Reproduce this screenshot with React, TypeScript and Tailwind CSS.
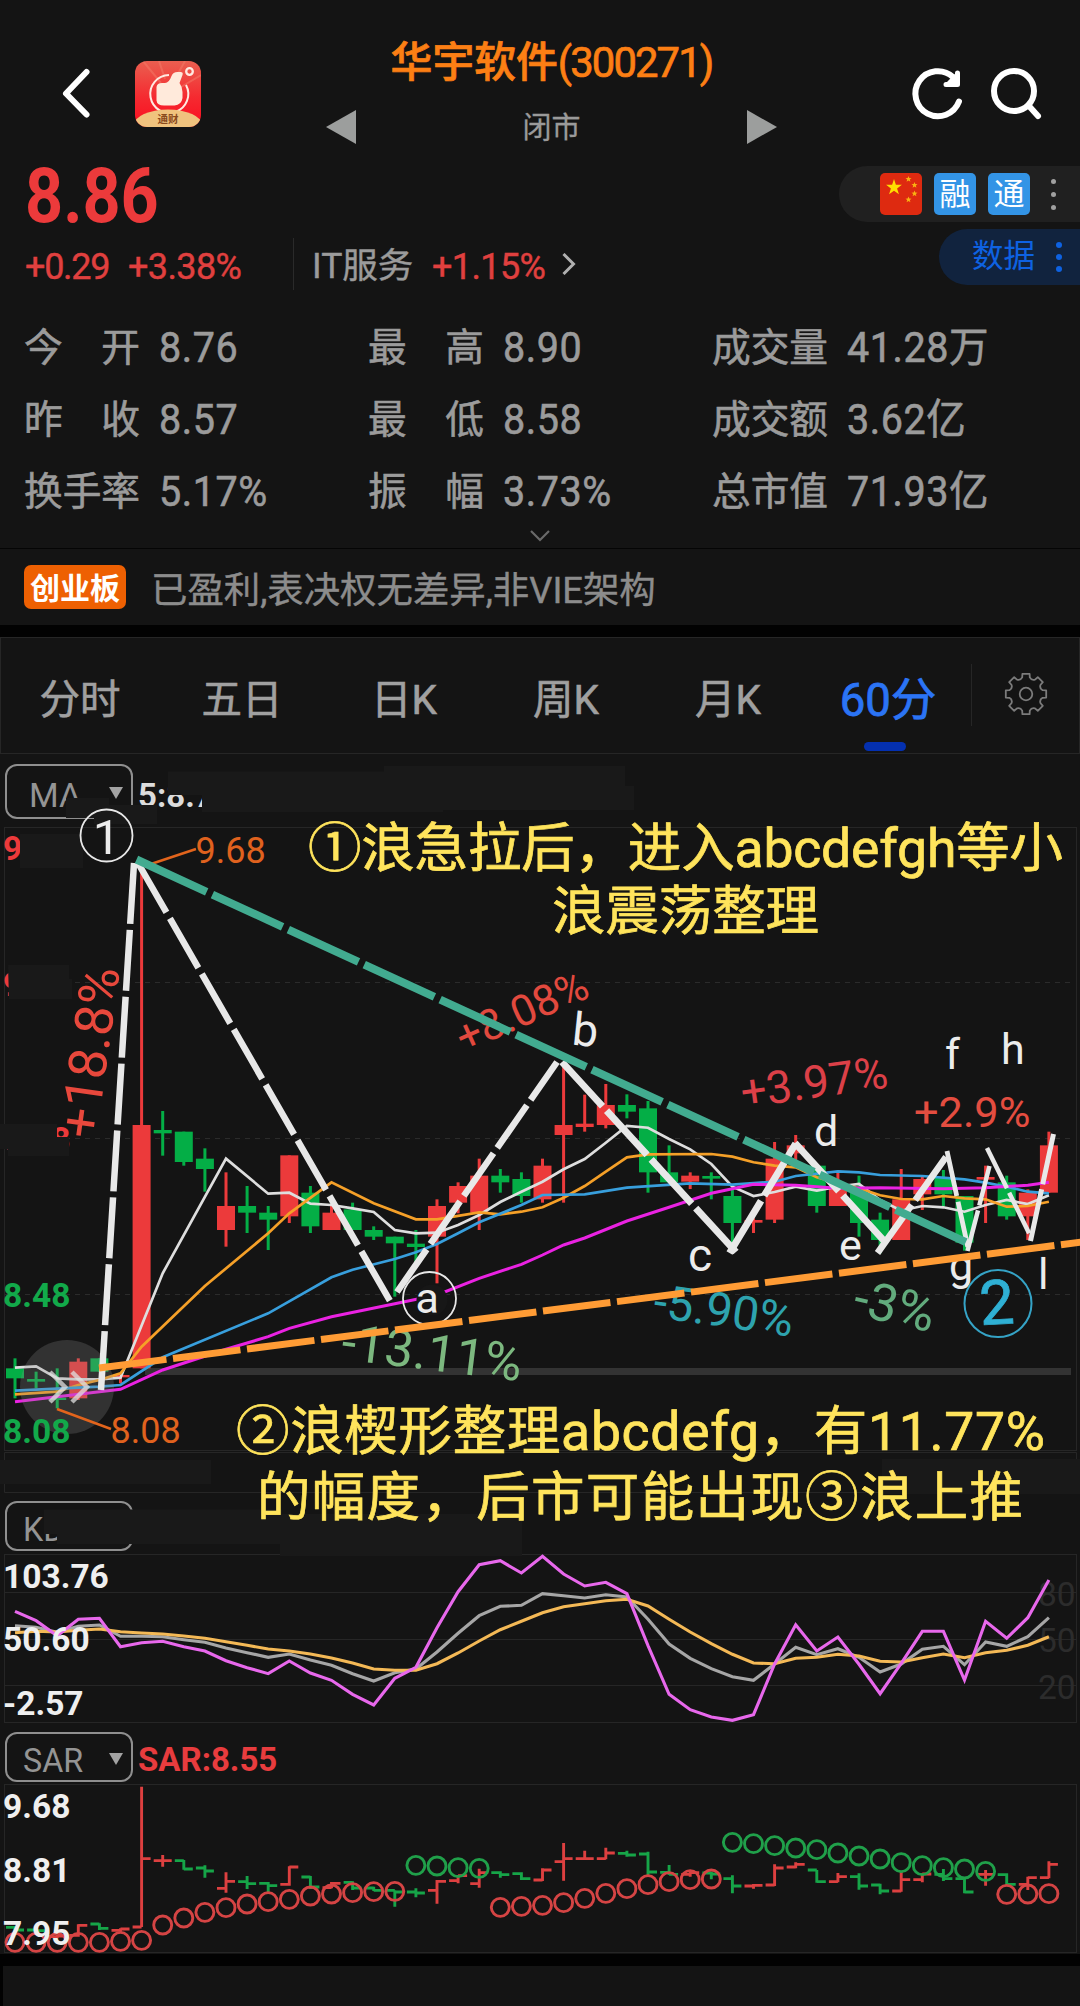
import React from 'react';

const UP = '#ec3a3b';
const DOWN = '#04ae46';

const COUNT = 50;
const xAt = (i: number) => 15 + 21.1 * i;

// every series is stored in thirds of a pixel below its panel origin
const MAIN_TOP = 1040;
const KDJ_TOP = 1460;
const SAR_TOP = 1720;

type Candle = ['u' | 'd', number, number, number, number];

// [direction, body top, body bottom, wick top, wick bottom]
const candles: Candle[] = [
  ['d', 985, 1015, 955, 1075], ['d', 1017, 1025, 995, 1045], ['d', 1073, 1080, 985, 1105],
  ['u', 965, 1075, 955, 1080], ['d', 955, 995, 955, 995], ['u', 1005, 1012, 1005, 1030],
  ['u', 255, 985, -520, 985], ['d', 270, 280, 213, 347], ['d', 275, 366, 275, 377],
  ['d', 356, 387, 325, 455], ['u', 498, 570, 397, 620], ['d', 498, 518, 438, 579],
  ['d', 518, 539, 498, 630], ['u', 346, 529, 346, 549], ['d', 458, 559, 438, 579],
  ['u', 518, 570, 498, 570], ['d', 508, 570, 488, 570], ['d', 570, 590, 559, 600],
  ['d', 590, 610, 590, 770], ['d', 611, 621, 570, 680], ['u', 498, 590, 478, 730],
  ['u', 438, 488, 427, 520], ['u', 407, 518, 356, 570], ['d', 407, 427, 387, 458],
  ['d', 417, 468, 397, 488], ['u', 377, 478, 356, 488], ['u', 255, 285, 80, 488],
  ['u', 251, 261, 164, 275], ['u', 195, 255, 132, 265], ['d', 195, 215, 163, 235],
  ['d', 205, 397, 183, 458], ['d', 397, 427, 316, 427], ['u', 407, 425, 397, 447],
  ['d', 408, 416, 397, 478], ['d', 468, 549, 447, 620], ['u', 540, 548, 535, 579],
  ['u', 356, 539, 306, 549], ['u', 316, 340, 285, 380], ['d', 377, 498, 377, 518],
  ['u', 440, 498, 397, 498], ['d', 440, 549, 407, 590], ['d', 539, 600, 518, 640],
  ['u', 478, 600, 387, 600], ['u', 417, 463, 407, 510], ['d', 412, 463, 390, 500],
  ['d', 468, 608, 468, 632], ['u', 411, 419, 377, 549], ['d', 427, 529, 407, 539],
  ['u', 458, 529, 448, 600], ['u', 316, 458, 275, 458],
];

type Point = [number, number];

const ma5: Point[] = [
  [0, 983], [1, 979], [2, 1015], [3, 1018], [4, 1018], [5, 1013], [7, 700], [10, 356], [12, 461], [13, 458],
  [14, 491], [15, 495], [16, 505], [17, 516], [18, 570], [19, 580], [20, 578], [21, 555], [22, 525], [23, 486],
  [24, 455], [25, 425], [26, 388], [27, 357], [28, 308], [29, 258], [30, 263], [31, 297], [32, 328], [33, 372],
  [34, 440], [35, 468], [36, 456], [37, 440], [38, 452], [39, 440], [40, 432], [41, 480], [42, 512], [43, 498],
  [44, 502], [45, 515], [46, 495], [47, 480], [48, 492], [49, 466],
];
const ma10: Point[] = [
  [0, 1063], [2, 1055], [3, 1035], [4, 1020], [5, 1000], [6, 920], [9, 738], [12, 580], [13, 520], [15, 427],
  [17, 490], [19, 538], [20, 538], [22, 517], [23, 523], [24, 515], [25, 502], [26, 473], [27, 438], [28, 395],
  [29, 352], [30, 343], [33, 342], [34, 350], [35, 367], [36, 377], [37, 382], [38, 412], [39, 430], [40, 445],
  [41, 466], [42, 477], [43, 478], [44, 468], [45, 475], [46, 478], [47, 500], [48, 498], [49, 485],
];
const ma20: Point[] = [
  [0, 1052], [4, 1040], [5, 1035], [7, 952], [12, 820], [15, 712], [16, 689], [18, 657], [19, 637], [20, 612],
  [21, 580], [22, 547], [24, 495], [25, 465], [27, 463], [29, 443], [32, 430], [34, 434], [36, 425], [37, 408],
  [39, 394], [40, 397], [41, 405], [43, 408], [45, 418], [46, 428], [47, 440], [48, 455], [49, 460],
];
const ma60: Point[] = [
  [0, 1085], [5, 1048], [7, 990], [10, 928], [12, 890], [13, 865], [15, 830], [18, 791], [20, 765], [22, 715],
  [24, 673], [25, 645], [26, 615], [27, 594], [29, 543], [31, 502], [33, 460], [35, 433], [37, 436], [39, 445],
  [41, 443], [44, 446], [46, 443], [48, 436], [49, 427],
];

const kdjK = [
  497, 502, 517, 499, 495, 529, 529, 530, 539, 547, 564, 578, 592, 582, 600, 616, 641, 663, 638, 627, 576, 520, 467,
  439, 436, 401, 407, 414, 404, 411, 478, 552, 595, 626, 650, 661, 612, 562, 584, 566, 592, 636, 612, 568, 559, 614,
  546, 559, 530, 473,
];
const kdjD = [
  518, 514, 516, 511, 507, 515, 519, 522, 528, 535, 545, 556, 567, 573, 582, 594, 609, 627, 631, 631, 611, 579, 543,
  509, 484, 458, 440, 431, 422, 418, 438, 478, 516, 551, 583, 609, 611, 595, 592, 583, 588, 604, 606, 593, 582, 593,
  578, 571, 556, 530,
];
const kdjJ = [
  454, 482, 527, 478, 475, 560, 548, 544, 560, 573, 602, 623, 641, 603, 639, 661, 703, 735, 655, 622, 503, 395, 314,
  302, 339, 289, 342, 378, 367, 401, 557, 703, 749, 771, 781, 764, 612, 494, 573, 531, 613, 701, 610, 514, 514, 660,
  484, 535, 473, 360,
];

// [direction, open, close, high, low]
const bars: Candle[] = [
  ['d', 622, 630, 619, 635], ['d', 630, 632, 628, 640], ['u', 650, 648, 645, 655], ['u', 646, 616, 613, 650],
  ['d', 612, 625, 610, 630], ['u', 631, 627, 625, 635], ['u', 621, 416, 200, 621], ['u', 422, 422, 405, 440],
  ['d', 422, 447, 420, 449], ['d', 444, 453, 436, 473], ['u', 505, 484, 457, 518], ['d', 485, 491, 468, 507],
  ['d', 490, 497, 486, 518], ['u', 493, 441, 439, 497], ['d', 471, 501, 468, 507], ['u', 503, 490, 486, 505],
  ['d', 487, 504, 484, 510], ['d', 504, 511, 500, 513], ['d', 511, 516, 511, 560], ['d', 516, 519, 505, 532],
  ['u', 511, 484, 480, 551], ['u', 482, 467, 465, 490], ['u', 491, 458, 446, 503], ['d', 458, 464, 454, 473],
  ['d', 461, 476, 457, 480], ['u', 480, 450, 445, 483], ['u', 425, 416, 369, 482], ['u', 416, 416, 392, 418],
  ['u', 416, 399, 383, 418], ['d', 400, 405, 392, 410], ['d', 402, 456, 395, 465], ['d', 457, 463, 435, 465],
  ['u', 463, 458, 455, 470], ['d', 459, 462, 455, 478], ['d', 476, 498, 466, 520], ['u', 498, 496, 492, 506],
  ['u', 495, 444, 433, 498], ['u', 441, 433, 427, 445], ['d', 450, 485, 450, 488], ['u', 485, 470, 459, 487],
  ['d', 470, 498, 460, 509], ['d', 495, 513, 491, 523], ['u', 513, 479, 455, 515], ['u', 479, 462, 460, 487],
  ['d', 463, 476, 447, 483], ['d', 476, 516, 474, 520], ['u', 463, 463, 450, 497], ['d', 464, 493, 460, 497],
  ['u', 493, 473, 470, 510], ['u', 473, 433, 424, 475],
];
const sar = [
  667, 667, 667, 667, 667, 664, 661, 615, 594, 577, 563, 552, 545, 538, 528, 522, 518, 515, 514, 436, 438, 443, 445,
  562, 559, 556, 548, 535, 520, 506, 494, 485, 479, 477, 367, 371, 377, 384, 389, 399, 408, 417, 428, 437, 443, 447,
  454, 523, 522, 521,
];
const sarFalling = (i: number) => (i >= 19 && i <= 22) || (i >= 34 && i <= 46);

const toPoints = (series: Point[], top: number) =>
  series.map(([i, v]) => `${xAt(i).toFixed(1)},${(top + v / 3).toFixed(1)}`).join(' ');
const indexed = (values: number[]): Point[] => values.slice(0, COUNT).map((v, i) => [i, v]);

const stats = [
  ['今　开', '8.76'], ['最　高', '8.90'], ['成交量', '41.28万'],
  ['昨　收', '8.57'], ['最　低', '8.58'], ['成交额', '3.62亿'],
  ['换手率', '5.17%'], ['振　幅', '3.73%'], ['总市值', '71.93亿'],
];

const tabs = ['分时', '五日', '日K', '周K', '月K'];

// [x1, y1, x2, y2, width, dash pattern]
const waves: [number, number, number, number, number, string][] = [
  [134, 863, 101, 1390, 6.5, '61 6'],
  [138, 863, 390, 1301, 6.5, '57 7'],
  [397, 1292, 557, 1062, 6.5, '52 6.5'],
  [562, 1062, 736, 1252, 7, '60 6'],
  [729.5, 1253, 796, 1143, 7, '61 6'],
  [795, 1143, 886, 1243, 7, '65 6'],
  [877.5, 1253, 946, 1157, 6.5, '59 6'],
  [947, 1151, 968.5, 1250, 4.8, '46 6'],
  [967.5, 1251, 989.5, 1166, 4.5, '42 5'],
  [987, 1148, 1029.5, 1234, 4.5, '45 5'],
  [1030.5, 1241, 1053.5, 1134, 5, '53 5'],
];

const marks: [string, number, number, number, number][] = [
  ['b', 571, 1044.5, 46, 6],
  ['c', 688, 1271, 46, 0],
  ['d', 814, 1146, 43, 0],
  ['e', 839, 1260, 43, 0],
  ['f', 945, 1069, 43, 0],
  ['g', 949, 1280, 43, 0],
  ['h', 1001, 1064, 43, 0],
  ['l', 1038, 1289, 43, 0],
];

const changes: [string, number, number, number, number, string][] = [
  ['+18.8%', 96, 1140, 53, -82, '#e8483c'],
  ['+8.08%', 464, 1053, 43, -24, '#e2493e'],
  ['+3.97%', 743, 1108, 45.5, -8, '#dc4048'],
  ['+2.9%', 914, 1127, 43.3, 0, '#e44d40'],
  ['-13.11%', 340, 1359, 51.5, 7, '#7cb87f'],
  ['-5.90%', 652, 1317, 47.5, 8, '#2ea3ae'],
  ['-3%', 851, 1314, 52, 13, '#62ab7d'],
];

const BackIcon = () => (
  <svg width="34" height="54" viewBox="0 0 34 54" fill="none" stroke="#fff" strokeWidth="6" strokeLinecap="round" strokeLinejoin="round">
    <path d="M28.500 5 8 26.500 28.500 47.500" />
  </svg>
);

const AppLogo = () => (
  <svg width="66" height="66" viewBox="0 0 66 66">
    <defs>
      <linearGradient id="logoRed" x1="0" y1="0" x2="0" y2="1">
        <stop offset="0" stopColor="#ea5f50" />
        <stop offset="0.55" stopColor="#f52a30" />
        <stop offset="1" stopColor="#fb0d20" />
      </linearGradient>
      <clipPath id="logoClip">
        <rect width="66" height="66" rx="12" />
      </clipPath>
    </defs>
    <g clipPath="url(#logoClip)">
      <rect width="66" height="66" fill="url(#logoRed)" />
      <path d="M8 0 26 22M24 0l6 18M50 0 40 18M66 14 46 26" stroke="#f5806d" strokeOpacity="0.45" strokeWidth="2" />
      <path d="M34 14A19 19 0 1 0 51 24" fill="none" stroke="#ffe9e0" strokeWidth="2" />
      <path d="M36.500 15q1.500-4 6-4h3q3 0 2 3l-3 8q3 4 3 9v6q-1 7-8 7.500H29q-7 0-7.500-5V26q.5-4 5.500-4h3q4 0 6.500-7Z" fill="#ffeadb" />
      <circle cx="54.500" cy="10.500" r="3.300" fill="none" stroke="#ffe9e0" strokeWidth="2.300" />
      <ellipse cx="33" cy="64" rx="34" ry="15.500" fill="#f0c37e" />
      <text x="33" y="62" textAnchor="middle" fontSize="10.500" fontWeight="700" fill="#8a4a1c">通财</text>
    </g>
  </svg>
);

const RefreshIcon = () => (
  <svg width="54" height="58" viewBox="0 0 54 58" fill="none" stroke="#fff" strokeWidth="6" strokeLinecap="round" strokeLinejoin="round">
    <path d="M49 36.500A22.500 22.500 0 1 1 43 12" />
    <path d="M47.500 8v11.500H36" strokeWidth="5" />
    <path d="M45.500 10.500v7h-7Z" fill="#fff" strokeWidth="3" />
  </svg>
);

const SearchIcon = () => (
  <svg width="54" height="58" viewBox="0 0 54 58" fill="none" stroke="#fff" strokeWidth="6" strokeLinecap="round">
    <circle cx="25" cy="26" r="20" />
    <path d="m40 41 9 10" />
  </svg>
);

const FlagIcon = () => (
  <svg width="42" height="42" viewBox="0 0 42 42">
    <rect width="42" height="42" rx="5" fill="#de2a10" />
    <path d="m14 6 1.900 5.700 6 .1-4.800 3.600 1.800 5.800L14 17.700l-4.900 3.500 1.800-5.800-4.800-3.600 6-.1Z" fill="#ffde00" />
    <g fill="#f9b212">
      <path d="m28.500 3 .8 2 2.200.2-1.700 1.400.6 2.100-1.900-1.100-1.900 1.100.6-2.100-1.700-1.400 2.200-.2Z" />
      <path d="m34.500 9 .8 2 2.200.2-1.700 1.400.6 2.100-1.900-1.100-1.900 1.100.6-2.100-1.700-1.400 2.200-.2Z" />
      <path d="m34.500 17.500.8 2 2.200.2-1.700 1.400.6 2.100-1.900-1.100-1.900 1.100.6-2.100-1.700-1.400 2.200-.2Z" />
      <path d="m28.500 23.500.8 2 2.200.2-1.700 1.400.6 2.100-1.900-1.100-1.900 1.100.6-2.100-1.700-1.400 2.200-.2Z" />
    </g>
  </svg>
);

const GearIcon = () => {
  const d = Array.from({ length: 8 }, (_, k) => {
    const p = (r: number, deg: number) => {
      const a = ((k * 45 + deg - 90) * Math.PI) / 180;
      return `${(22 + r * Math.cos(a)).toFixed(1)} ${(22 + r * Math.sin(a)).toFixed(1)}`;
    };
    return `${k === 0 ? 'M' : 'L'}${p(20.5, -10)}L${p(20.5, 10)}L${p(17, 13)}Q${p(14.5, 22.5)} ${p(17, 32)}`;
  }).join('');
  return (
    <svg width="44" height="44" viewBox="0 0 44 44" fill="none" stroke="#7b7b7b" strokeWidth="1.800" strokeLinejoin="round">
      <path d={`${d}Z`} />
      <circle cx="22" cy="22" r="6.300" />
    </svg>
  );
};

const Dots = ({ className }: { className: string }) => (
  <div className={`flex flex-col justify-between ${className}`}>
    <i className="block size-full rounded-full bg-current" />
    <i className="block size-full rounded-full bg-current" />
    <i className="block size-full rounded-full bg-current" />
  </div>
);

const IndicatorSelect = ({ name, wide }: { name: string; wide?: boolean }) => (
  <div className="flex h-full w-[128px] shrink-0 items-center justify-between rounded-[12px] border-2 border-[#8f8f8f] pr-[8px] pl-[16px] text-[34px] leading-none text-[#949494]">
    <span className={`inline-block origin-left pt-[6px] ${wide ? 'pl-[6px]' : 'scale-x-[0.95]'}`}>{name}</span>
    <svg width="14" height="12" viewBox="0 0 14 12" className="mt-[3px]">
      <path d="M0 0h14L7 12Z" fill="#a3a3a3" />
    </svg>
  </div>
);

const AxisLabel = ({ y, fill, children }: { y: number; fill: string; children: string }) => (
  <text x="3" y={y} fontSize="33.500" fontWeight="700" fill={fill}>
    {children}
  </text>
);

const Header = () => (
  <header className="flex h-[150px] justify-between pt-[41px] pr-[37px] pl-[58px]">
    <div className="flex w-[268px] gap-[43px] pt-[20px]">
      <div className="pt-[6px]">
        <BackIcon />
      </div>
      <AppLogo />
    </div>
    <div className="flex w-[451px] flex-col items-center">
      <h1 className="-mt-[1px] text-[41.8px] leading-[46px] font-medium whitespace-nowrap text-[#fc7f14] [-webkit-text-stroke:0.7px_#fc7f14]">
        华宇软件<span className="font-normal tracking-[-1.9px]">(300271)</span>
      </h1>
      <div className="mt-[17px] flex w-full items-center justify-between text-[29px] leading-[44px] text-[#9a9a9a] [-webkit-text-stroke:0.3px_#9a9a9a]">
        <svg width="30" height="34" viewBox="0 0 30 34">
          <path d="M30 0v34L0 17Z" fill="#9c9e9d" />
        </svg>
        <span className="pt-[3px]">闭市</span>
        <svg width="30" height="34" viewBox="0 0 30 34">
          <path d="M0 0v34l30-17Z" fill="#9c9e9d" />
        </svg>
      </div>
    </div>
    <div className="flex w-[266px] justify-end gap-[25px] pt-[24px]">
      <RefreshIcon />
      <SearchIcon />
    </div>
  </header>
);

const Quote = () => (
  <section className="flex h-[150px] justify-between">
    <div className="pl-[25px]">
      <div className="origin-left scale-x-[0.875] pt-[8px] text-[76px] leading-[76px] font-bold text-[#ec3a3b]">8.86</div>
      <div className="mt-[4px] flex h-[52px] items-center text-[36px] leading-none text-[#e0403f] [-webkit-text-stroke:0.4px_currentColor]">
        <span className="w-[103px] pt-[6px] tracking-[-1.3px]">+0.29</span>
        <span className="w-[165px] pt-[6px] tracking-[-0.6px]">+3.38%</span>
        <span className="h-full w-px bg-[#2a2a2a]" />
        <span className="w-[119px] pt-[6px] pl-[18px] text-[35.5px] whitespace-nowrap text-[#9b9b9b]">IT服务</span>
        <span className="w-[149px] pt-[6px] pl-[19px] tracking-[-0.6px]">+1.15%</span>
        <svg width="14" height="22" viewBox="0 0 14 22" fill="none" stroke="#b0b0b0" strokeWidth="3">
          <path d="m1.500 1 10 10-10 10" />
        </svg>
      </div>
    </div>
    <div className="flex flex-col items-end gap-[7px] pt-[16px]">
      <div className="flex h-[56px] w-[241px] items-center gap-[12px] rounded-l-full bg-[#202020] pl-[41px] text-[31px] leading-none text-white">
        <FlagIcon />
        <span className="flex size-[42px] items-center justify-center rounded-[5px] bg-[#3394e6]">融</span>
        <span className="flex size-[42px] items-center justify-center rounded-[5px] bg-[#3394e6]">通</span>
        <Dots className="ml-[9px] h-[31px] w-[5px] gap-[8px] text-[#a0a0a0]" />
      </div>
      <div className="flex h-[56px] w-[141px] items-center rounded-l-full bg-[#11233e] pl-[33px] text-[31.5px] leading-none text-[#0e62e2]">
        数据
        <Dots className="ml-[21px] h-[30px] w-[6px] gap-[6px]" />
      </div>
    </div>
  </section>
);

const Stats = () => (
  <section className="h-[248px] pt-[12px] pl-[24px]">
    <div className="grid grid-cols-[344px_344px_1fr] text-[#9b9b9b] [-webkit-text-stroke:0.6px_#9b9b9b]">
      {stats.map(([label, value]) => (
        <div key={label} className="flex h-[72px] items-center leading-none whitespace-nowrap">
          <span className="w-[135px] text-[38.7px]">{label}</span>
          <span className="inline-block origin-left scale-x-[0.94] text-[42px] tracking-[0.6px]">{value}</span>
        </div>
      ))}
    </div>
    <svg width="20" height="12" viewBox="0 0 20 12" className="mt-[2px] ml-[506px]" fill="none" stroke="#6a6a6a" strokeWidth="2.200">
      <path d="m1 1 9 9 9-9" />
    </svg>
  </section>
);

const BoardNotice = () => (
  <section className="flex h-[77px] items-center border-t border-[#050505] pl-[24px] leading-none">
    <span className="flex h-[44px] w-[102px] items-center justify-center rounded-[7px] bg-[#ee6002] pt-[3px] text-[30px] font-bold whitespace-nowrap text-white">
      创业板
    </span>
    <span className="pt-[8px] pl-[25px] text-[36.4px] text-[#8c8c8c] [-webkit-text-stroke:0.4px_#8c8c8c]">
      已盈利,表决权无差异,非VIE架构
    </span>
  </section>
);

const PeriodTabs = () => (
  <nav className="flex h-[117px] border border-[#262626] text-[40.5px] leading-none text-[#a0a0a0]">
    {tabs.map((tab) => (
      <span key={tab} className="flex w-[162px] justify-center pt-[42px] pr-[4px] [-webkit-text-stroke:0.6px_#a0a0a0]">
        {tab}
      </span>
    ))}
    <span className="-ml-[3px] flex w-[163px] flex-col items-center pt-[40px] text-[45.5px] text-[#2b74f5]">
      <span className="-ml-[3px] h-[44px] [-webkit-text-stroke:0.8px_#2b74f5]">60分</span>
      <i className="mt-[20px] mr-[10px] block h-[9px] w-[42px] rounded-full bg-[#0430b0]" />
    </span>
    <span className="mt-[26px] h-[62px] w-px bg-[#262626]" />
    <span className="pt-[34px] pl-[32px]">
      <GearIcon />
    </span>
  </nav>
);

const MainChart = () => (
  <svg width="1080" height="740" viewBox="0 820 1080 740" className="block h-[674px]" preserveAspectRatio="xMidYMin slice">
    <g fill="none" stroke="#262626">
      <rect x="4.500" y="827.500" width="1072" height="623" />
      <path d="M4.500 1452.500h1072v40H4.500Z" />
      <path d="M5 982.500h1065M5 1138.500h1065M5 1294.500h1065" strokeDasharray="5 5" stroke="#2b2b2b" />
    </g>
    <path d="M145 1371.500h926" stroke="#333" strokeWidth="7" />
    {candles.map(([dir, top, bottom, high, low], i) => {
      const color = dir === 'u' ? UP : DOWN;
      return (
        <g key={i}>
          <rect x={xAt(i) - 1.5} y={MAIN_TOP + high / 3} width="3" height={(low - high) / 3} fill={color} />
          <rect x={xAt(i) - 9} y={MAIN_TOP + top / 3} width="18" height={(bottom - top) / 3} fill={color} />
        </g>
      );
    })}
    <g fill="none" strokeWidth="2.700">
      <polyline points={toPoints(ma5, MAIN_TOP)} stroke="#dedede" />
      <polyline points={toPoints(ma10, MAIN_TOP)} stroke="#f5a028" />
      <polyline points={toPoints(ma20, MAIN_TOP)} stroke="#389fdd" />
      <polyline points={toPoints(ma60, MAIN_TOP)} stroke="#ea22e2" strokeWidth="3" />
    </g>
    <circle cx="67" cy="1387" r="47" fill="#8a8a8a" fillOpacity="0.250" />
    <path d="m50 1372 15 15-15 15M72 1372l15 15-15 15" fill="none" stroke="#e0e0e0" strokeOpacity="0.750" strokeWidth="4.500" />
    <AxisLabel y={860} fill={UP}>9</AxisLabel>
    <AxisLabel y={996} fill={UP}>9</AxisLabel>
    <AxisLabel y={1151} fill={UP}>8.88</AxisLabel>
    <AxisLabel y={1307} fill="#12a94a">8.48</AxisLabel>
    <AxisLabel y={1443} fill="#12a94a">8.08</AxisLabel>
    <path d="M151 864 196 849M57 1409l54 20" stroke="#e2641c" strokeWidth="2.500" />
    <g fontSize="36" fill="#e0621e">
      <text x="195.500" y="862.500">9.68</text>
      <text x="110.500" y="1442.500">8.08</text>
    </g>
  </svg>
);

const KdjChart = () => (
  <svg width="1080" height="170" viewBox="0 1554 1080 170" className="block">
    <g fill="none" stroke="#262626">
      <rect x="4.500" y="1554.500" width="1072" height="168" />
      <path d="M4 1592.500h1072M4 1639.500h1072M4 1685.500h1072" />
    </g>
    <g fontSize="33.500" fill="#2c2c2c">
      <text x="1038" y="1605.500">80</text>
      <text x="1038" y="1651.500">50</text>
      <text x="1038" y="1698.500">20</text>
    </g>
    <g fill="none" strokeWidth="3.100">
      <polyline points={toPoints(indexed(kdjK), KDJ_TOP)} stroke="#a6a6a6" />
      <polyline points={toPoints(indexed(kdjD), KDJ_TOP)} stroke="#f4b956" />
      <polyline points={toPoints(indexed(kdjJ), KDJ_TOP)} stroke="#e868ec" />
    </g>
    <AxisLabel y={1588} fill="#efefef">103.76</AxisLabel>
    <AxisLabel y={1651} fill="#efefef">50.60</AxisLabel>
    <AxisLabel y={1715} fill="#efefef">-2.57</AxisLabel>
  </svg>
);

const SarChart = () => (
  <svg width="1080" height="170" viewBox="0 1784 1080 170" className="block">
    <rect x="4.500" y="1784.500" width="1072" height="168" fill="none" stroke="#262626" />
    <g fill="none" strokeWidth="2.900">
      {bars.map(([dir, open, close, high, low], i) => {
        const x = xAt(i);
        const y = (v: number) => SAR_TOP + v / 3;
        return (
          <path
            key={i}
            d={`M${x - 9} ${y(open)}H${x}M${x} ${y(close)}H${x + 9}M${x} ${y(high)}V${y(low)}`}
            stroke={dir === 'u' ? '#dd4040' : '#16a548'}
          />
        );
      })}
      {sar.map((v, i) => (
        <circle key={i} cx={xAt(i)} cy={SAR_TOP + v / 3} r="9" stroke={sarFalling(i) ? '#20a04a' : '#d54444'} />
      ))}
    </g>
    <AxisLabel y={1818} fill="#efefef">9.68</AxisLabel>
    <AxisLabel y={1882} fill="#efefef">8.81</AxisLabel>
    <AxisLabel y={1945} fill="#efefef">7.95</AxisLabel>
  </svg>
);

// hand-drawn notes that float over all the panels
const Annotations = () => (
  <svg width="1080" height="846" viewBox="0 754 1080 846" className="pointer-events-none absolute top-0 left-0">
    <g fill="#191919">
      <path d="M168 771.500h216V766h241v20h9v24H443v2H202v-17h-34Z" />
      <path d="M66 798h43v7h48v19H94v-6H66Z" />
      <rect x="20" y="834" width="63" height="34" />
      <path d="M8 965h61v14h3v20H9Z" />
      <path d="M0 1124h57v13h12v19H8v-7H0Z" />
      <path d="M0 1460h211v24H0ZM882 1459h198v35H882Z" />
      <path d="M44 1509.500h238v4.500h240v42H280v-12H57v-10H44Z" />
    </g>

    <g fill="none" stroke="#e8e8e8">
      {waves.map(([x1, y1, x2, y2, width, dash], i) => (
        <line key={i} x1={x1} y1={y1} x2={x2} y2={y2} strokeWidth={width} strokeDasharray={dash} />
      ))}
    </g>

    {changes.map(([label, x, y, size, angle, color]) => (
      <text key={label} transform={`translate(${x} ${y}) rotate(${angle})`} fontSize={size} fill={color}>
        {label}
      </text>
    ))}

    <line x1="136.500" y1="859.500" x2="969" y2="1243.500" stroke="#42ab90" strokeWidth="8" strokeDasharray="77.300 6.300" />

    <circle cx="432" cy="1300" r="15.500" fill="#171717" />
    <g fill="#ececec">
      {marks.map(([label, x, y, size, angle]) => (
        <text key={label} transform={`translate(${x} ${y}) rotate(${angle})`} fontSize={size}>
          {label}
        </text>
      ))}
      <text x="415.500" y="1312.500" fontSize="43">a</text>
      <text x="106.500" y="853.500" fontSize="49" textAnchor="middle">1</text>
    </g>
    <g fill="none" stroke="#e8e8e8" strokeWidth="1.800">
      <circle cx="429.500" cy="1298.500" r="26.500" />
      <circle cx="106.500" cy="835.500" r="26" />
    </g>

    <line x1="99" y1="1368" x2="1082" y2="1242" stroke="#ff9c35" strokeWidth="7" strokeDasharray="68 6.600" />

    <circle cx="998" cy="1303.500" r="33.500" fill="none" stroke="#35a3c6" strokeWidth="2" />
    <text transform="translate(980.500 1325) rotate(-3)" fontSize="62" fill="#2fb0d4" stroke="#2fb0d4" strokeWidth="0.800">2</text>

    <g fontSize="53.500" fill="#ffe45c" stroke="#ffe45c" strokeWidth="0.700">
      <text x="308" y="866.500" textLength="755">①浪急拉后，进入abcdefgh等小</text>
      <text x="552" y="930" textLength="267">浪震荡整理</text>
      <text x="236" y="1450" textLength="809">②浪楔形整理abcdefg，有11.77%</text>
      <text x="257" y="1516" textLength="766">的幅度，后市可能出现③浪上推</text>
    </g>
  </svg>
);

export default function App() {
  return (
    <div className="h-[2006px] w-[1080px] overflow-hidden bg-[#141414] font-['Roboto','Noto_Sans_CJK_SC',sans-serif]">
      <Header />
      <Quote />
      <Stats />
      <BoardNotice />
      <div className="h-[12px] bg-[#020202]" />
      <PeriodTabs />

      <main className="relative">
        <div className="flex h-[66px] items-start gap-[5px] pt-[10px] pl-[5px]">
          <div className="h-[55px]">
            <IndicatorSelect name="MA" wide />
          </div>
          <span className="pt-[13px] text-[33px] leading-[38px] font-bold text-[#dcdcdc]">5:8.7</span>
        </div>
        <MainChart />
        <div className="h-[60px] pt-[7px] pl-[5px]">
          <div className="h-[50px]">
            <IndicatorSelect name="KD" />
          </div>
        </div>
        <KdjChart />
        <div className="flex h-[60px] items-start gap-[5px] pt-[8px] pl-[5px]">
          <div className="h-[50px]">
            <IndicatorSelect name="SAR" />
          </div>
          <span className="pt-[9px] text-[33px] leading-[38px] font-bold text-[#e83c3e]">SAR:8.55</span>
        </div>
        <SarChart />
        <Annotations />
      </main>

      <div className="h-[12px] bg-[#020202]" />
      <div className="h-[40px] border-l-[3px] border-[#020202]" />
    </div>
  );
}
